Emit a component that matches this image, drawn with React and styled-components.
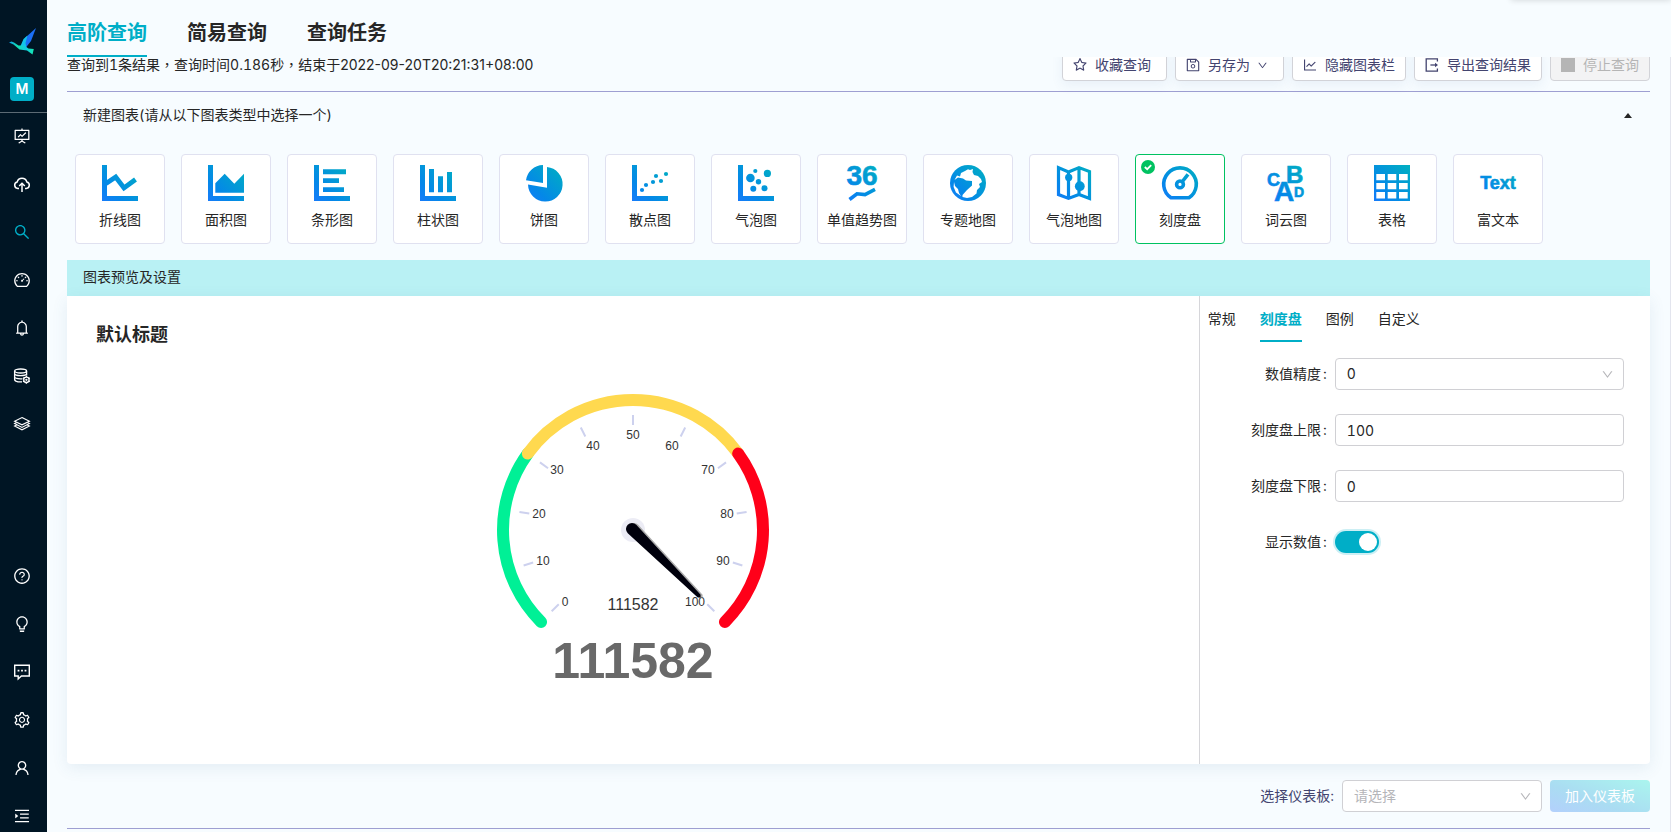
import React, { useState } from 'react';
import { styled, createGlobalStyle } from 'styled-components';
import {
    AiOutlineFundProjectionScreen,
    AiOutlineSearch,
    AiOutlineDashboard,
    AiOutlineBell,
    AiOutlineQuestionCircle,
    AiOutlineBulb,
    AiOutlineSetting,
    AiOutlineUser,
    AiOutlineMenuUnfold,
    AiOutlineStar,
    AiOutlineSave,
    AiOutlineLineChart,
    AiOutlineDown,
} from 'react-icons/ai';

const UploadIcon = () => (
    <svg width="18" height="18" viewBox="0 0 18 18" fill="none" stroke="currentColor" strokeWidth="1.5">
        <path d="M6 13.4H4.8A3.3 3.3 0 0 1 4.2 6.9A5 5 0 0 1 13.8 6.9A3.3 3.3 0 0 1 13.2 13.4H12" />
        <path d="M9 17V9" />
        <path d="M6.2 11L9 8.2L11.8 11" />
    </svg>
);

const DatabaseIcon = () => (
    <svg width="18" height="18" viewBox="0 0 18 18" fill="none" stroke="currentColor" strokeWidth="1.3">
        <ellipse cx="7.6" cy="4" rx="6" ry="2" />
        <path d="M1.6 4V12.4Q1.8 14.4 5 14.8H9M13.6 4V8.6" />
        <path d="M1.6 7Q2 8.6 7.6 8.6T13.6 7M1.6 10.2Q2 11.8 7.6 11.8H9.4" />
        <circle cx="13.4" cy="12.8" r="2.7" />
        <circle cx="13.4" cy="12.8" r="0.5" />
        <path d="M13.4 8.9V10M13.4 15.6V16.7M10 10.9L11 11.4M15.8 14.2L16.8 14.7M16.8 10.9L15.8 11.4M11 14.2L10 14.7" />
    </svg>
);

const LayersIcon = () => (
    <svg width="18" height="18" viewBox="0 0 18 18" fill="none" stroke="currentColor" strokeWidth="1.1">
        <path d="M9 2.6L16.4 6.2L9 9.8L1.6 6.2Z" />
        <path d="M3.6 7.6L1.6 8.6L9 12.4L16.4 8.6L14.4 7.6M3.6 10L1.6 11L9 14.8L16.4 11L14.4 10" />
    </svg>
);

const ChatIcon = () => (
    <svg width="18" height="18" viewBox="0 0 18 18" fill="none" stroke="currentColor" strokeWidth="1.4">
        <path d="M1.7 2.2H16.3V13H8.4L5.2 16V13H1.7Z" />
        <path d="M4.6 7.6H6.4M8.1 7.6H9.9M11.6 7.6H13.4" strokeWidth="1.8" />
    </svg>
);

const ExportIcon = () => (
    <svg width="16" height="16" viewBox="0 0 16 16" fill="none" stroke="currentColor" strokeWidth="1.3">
        <path d="M13.4 4.4V1.8H2.2V14.2H13.4V11.6" />
        <path d="M6.4 8H12" />
        <path d="M11 5.8L14 8L11 10.2Z" fill="currentColor" stroke="none" />
    </svg>
);

const Logo = () => (
    <svg width="27" height="27" viewBox="0 0 27 27">
        <defs>
            <linearGradient id="bird-body" x1="0" y1="0" x2="1" y2="0">
                <stop offset="0" stopColor="#0a9be8" />
                <stop offset="0.35" stopColor="#14e0b0" />
                <stop offset="0.65" stopColor="#12c8e0" />
                <stop offset="1" stopColor="#14e8b0" />
            </linearGradient>
        </defs>
        <path d="M14 19L16.5 9.5L27 0L22 13L16.5 20Z" fill="#1b6ff5" />
        <path d="M11.5 18L14.5 11L18.5 7.5L16.5 15L17.5 20Z" fill="#12c4ea" />
        <path d="M0 14.4L2.5 13.4L5 14.6L9.5 17.6L15 17.6L19.5 20.6L24.8 21L23.5 26.5L18 22.4L10.5 21.6L4.5 16.4Z" fill="url(#bird-body)" />
    </svg>
);

const Axis = () => <path d="M0 0H5V31H36V36H0Z" />;

const chartTypes = [
    {
        key: 'line', label: '折线图',
        art: <><Axis /><path d="M4 18.5L13.7 12L22 23L33.5 14.5" fill="none" stroke="url(#ink)" strokeWidth="4.8" /></>,
    },
    {
        key: 'area', label: '面积图',
        art: <><Axis /><path d="M7.3 18.3L16.7 8.7L26.3 18.7L36 8.7V27.7H7.3Z" /></>,
    },
    {
        key: 'bar', label: '条形图',
        art: <><Axis /><path d="M9 4.3H32V9.3H9ZM9 13.3H25V18H9ZM9 22.3H30V27H9Z" /></>,
    },
    {
        key: 'column', label: '柱状图',
        art: <><Axis /><path d="M9 4H14V27.3H9ZM18 11.3H23V27.3H18ZM27 7H32V27.3H27Z" /></>,
    },
    {
        key: 'pie', label: '饼图',
        art: <path d="M17 0V18L0 15.2A17.4 17.4 0 0 1 17 0ZM21 2A17.3 17.3 0 1 1 2 19.6L21 22.8Z" />,
    },
    {
        key: 'scatter', label: '散点图',
        art: (
            <>
                <Axis />
                {[[10, 25], [14, 20], [21, 17], [24, 11], [29, 16], [34, 9]].map(([x, y]) => (
                    <circle key={x} cx={x} cy={y} r="2.1" />
                ))}
            </>
        ),
    },
    {
        key: 'bubble', label: '气泡图',
        art: (
            <>
                <Axis />
                {[[12.4, 13, 4.3], [17.3, 6, 2.1], [29.4, 8.4, 3.6], [20.5, 16.7, 2.7], [15.3, 23.8, 3], [26.5, 23.2, 3]].map(([x, y, r]) => (
                    <circle key={x} cx={x} cy={y} r={r} />
                ))}
            </>
        ),
    },
    {
        key: 'trend', label: '单值趋势图',
        art: (
            <>
                <IconText x="18" y="20" size={28} textAnchor="middle">36</IconText>
                <path d="M5.5 34.5L13 28.8L21 29.6L31 24.4" fill="none" stroke="url(#ink)" strokeWidth="3.6" />
            </>
        ),
    },
    {
        key: 'region', label: '专题地图',
        art: (
            <>
                <circle cx="18" cy="18" r="18" />
                <path
                    d="M4.5 15L7 10.5L10 11.5L11 8L15 6L18 4.2L20 5L23 4L22.5 7L24 10L28 11L31 14L32 17L29 19L30 22L27 25L26.5 28.5L22 32L17 33L12.5 32L12.5 30L17 25L22 20.5V16L16 15.5L13 13.5L8 12.5Z"
                    fill="#fff"
                />
                <path d="M4 17L5 21L8 24L9 28L11 31L6 27.5L3.6 22Z" fill="#fff" />
            </>
        ),
    },
    {
        key: 'bubblemap', label: '气泡地图',
        art: (
            <>
                <path
                    d="M2.5 2.6L12.5 7L23 2.6L33.5 6.5V33.4L23 29.4L12.5 33.4L2.5 29.6ZM12.5 7V33M23 3V30"
                    fill="none" stroke="url(#ink)" strokeWidth="3.2"
                />
                <circle cx="12.7" cy="12.4" r="3.6" />
                <circle cx="23.8" cy="21.2" r="4.9" />
            </>
        ),
    },
    {
        key: 'gauge', label: '刻度盘',
        art: (
            <g fill="none" stroke="url(#ink)" strokeWidth="3.6">
                <path d="M9 32.8A16.3 16.3 0 1 1 27 32.8Z" />
                <circle cx="18" cy="19.4" r="3.4" />
                <path d="M20 17L26 9.4" />
            </g>
        ),
    },
    {
        key: 'cloud', label: '词云图',
        art: (
            <>
                <IconText x="-1" y="20.5" size={18}>C</IconText>
                <IconText x="18" y="18" size={24}>B</IconText>
                <IconText x="6" y="36" size={28}>A</IconText>
                <IconText x="26" y="31.5" size={14}>D</IconText>
            </>
        ),
    },
    {
        key: 'table', label: '表格',
        art: (
            <path
                fillRule="evenodd"
                d="M0 0H36V36H0ZM2.3 9V15.3H11V9ZM13.7 9V15.3H22.3V9ZM25 9V15.3H33.7V9ZM2.3 18V24.3H11V18ZM13.7 18V24.3H22.3V18ZM25 18V24.3H33.7V18ZM2.3 27V33.6H11V27ZM13.7 27V33.6H22.3V27ZM25 27V33.6H33.7V27Z"
            />
        ),
    },
    {
        key: 'text', label: '富文本',
        art: <IconText x="18" y="24" size={18} textAnchor="middle">Text</IconText>,
    },
];

function IconText({ size, children, ...rest }) {
    return (
        <text
            fontFamily="Liberation Sans, Arial, sans-serif"
            fontWeight="700"
            fontSize={size}
            stroke="url(#ink)"
            strokeWidth="0.6"
            {...rest}
        >
            {children}
        </text>
    );
}

const topMenu = [
    { label: '仪表板', icon: <AiOutlineFundProjectionScreen /> },
    { label: '数据导入', icon: <UploadIcon /> },
    { label: '查询', icon: <AiOutlineSearch />, active: true },
    { label: '监控', icon: <AiOutlineDashboard /> },
    { label: '告警', icon: <AiOutlineBell /> },
    { label: '数据集', icon: <DatabaseIcon /> },
    { label: '资源', icon: <LayersIcon /> },
];

const bottomMenu = [
    { label: '帮助', icon: <AiOutlineQuestionCircle /> },
    { label: '提示', icon: <AiOutlineBulb /> },
    { label: '消息', icon: <ChatIcon /> },
    { label: '设置', icon: <AiOutlineSetting /> },
    { label: '用户', icon: <AiOutlineUser /> },
];

// value, x, baseline
const dialLabels = [
    [0, 92, 258], [10, 70, 217], [20, 66, 170], [30, 84, 126], [40, 120, 102], [50, 160, 91],
    [60, 199, 102], [70, 235, 126], [80, 254, 170], [90, 250, 217], [100, 222, 258],
];

const CX = 160;
const CY = 182;

// value is 0 - 100, the dial runs from 225deg to -45deg
const dialPoint = (value, r) => {
    const a = ((225 - value * 2.7) * Math.PI) / 180;
    return `${(CX + r * Math.cos(a)).toFixed(2)} ${(CY - r * Math.sin(a)).toFixed(2)}`;
};

const arc = (from, to) => `M${dialPoint(from, 130)}A130 130 0 0 1 ${dialPoint(to, 130)}`;

const NEEDLE = 'M0 -6A6 6 0 0 0 0 6L95 2L97 0L95 -2Z';

function GaugeChart() {
    return (
        <GaugeSvg viewBox="0 1 320 415" role="img" aria-label="111582">
            <g fill="none" strokeWidth="12" strokeLinecap="round">
                <path d={arc(0, 30)} stroke="#00f096" />
                <path d={arc(30, 70)} stroke="#ffd94f" />
                <path d={arc(70, 100)} stroke="#ff0019" />
            </g>
            {dialLabels.map(([value, x, y]) => (
                <g key={value}>
                    <path d={`M${dialPoint(value, 115)}L${dialPoint(value, 105)}`} stroke="#cdd1ee" strokeWidth="2" />
                    <text x={x} y={y} fontSize="12" textAnchor="middle" fill="#333">{value}</text>
                </g>
            ))}
            <circle cx={CX} cy={CY} r="12" fill="#ececf5" />
            <path d={NEEDLE} transform="translate(161 181) rotate(45)" fill="#aaa" />
            <path d={NEEDLE} transform="translate(159 181) rotate(45)" fill="#00000c" />
            <text x={CX} y="262" fontSize="16" textAnchor="middle" fill="#333">111582</text>
            <text x={CX} y="330" fontSize="50" fontWeight="700" textAnchor="middle" fill="#696969">111582</text>
        </GaugeSvg>
    );
}

function App() {
    const [chartType, setChartType] = useState('gauge');
    const [showValue, setShowValue] = useState(true);

    return (
        <Layout>
            <GlobalStyle />
            <Defs aria-hidden="true">
                <defs>
                    <linearGradient id="ink" gradientUnits="userSpaceOnUse" x1="0" y1="36" x2="36" y2="0">
                        <stop offset="0" stopColor="#177bfa" />
                        <stop offset="0.3" stopColor="#0488e8" />
                        <stop offset="1" stopColor="#00b0c0" />
                    </linearGradient>
                </defs>
            </Defs>

            <Sidebar>
                <LogoLink href="#"><Logo /></LogoLink>
                <Avatar>M</Avatar>
                <Menu>
                    {topMenu.map((item) => (
                        <MenuButton key={item.label} aria-label={item.label} $active={item.active}>{item.icon}</MenuButton>
                    ))}
                </Menu>
                <BottomMenu>
                    {bottomMenu.map((item) => (
                        <MenuButton key={item.label} aria-label={item.label}>{item.icon}</MenuButton>
                    ))}
                    <Trigger aria-label="展开菜单"><AiOutlineMenuUnfold /></Trigger>
                </BottomMenu>
            </Sidebar>

            <Main>
                <Header>
                    <PageTab $active>高阶查询</PageTab>
                    <PageTab>简易查询</PageTab>
                    <PageTab>查询任务</PageTab>
                </Header>
                <Content>
                    <Toolbar>
                        <Status>查询到1条结果，查询时间0.186秒，结束于<Time>2022-09-20T20:21:31+08:00</Time></Status>
                        <ToolButtons>
                            <ToolButton $wide><AiOutlineStar />收藏查询</ToolButton>
                            <ToolButton $wide><AiOutlineSave />另存为<SmallDown /></ToolButton>
                            <ToolButton><AiOutlineLineChart />隐藏图表栏</ToolButton>
                            <ToolButton><ExportIcon />导出查询结果</ToolButton>
                            <ToolButton disabled><StopSquare viewBox="0 0 16 16"><path d="M1 1H15V15H1Z" /></StopSquare>停止查询</ToolButton>
                        </ToolButtons>
                    </Toolbar>

                    <SectionHead>
                        新建图表(请从以下图表类型中选择一个)
                        <Collapse aria-label="收起"><Caret /></Collapse>
                    </SectionHead>

                    <CardList>
                        {chartTypes.map((type) => (
                            <Card
                                key={type.key}
                                onClick={() => setChartType(type.key)}
                                $selected={chartType === type.key}
                            >
                                {chartType === type.key && (
                                    <Check viewBox="0 0 14 14">
                                        <circle cx="7" cy="7" r="7" fill="#00c261" />
                                        <path d="M3.8 7L6.2 9.2L10.2 5.2" fill="none" stroke="#fff" strokeWidth="1.8" />
                                    </Check>
                                )}
                                <CardIcon viewBox="0 0 36 36" fill="url(#ink)">{type.art}</CardIcon>
                                {type.label}
                            </Card>
                        ))}
                    </CardList>

                    <Banner>图表预览及设置</Banner>
                    <Panel>
                        <Preview>
                            <ChartTitle>默认标题</ChartTitle>
                            <GaugeChart />
                        </Preview>
                        <Settings>
                            <SettingTabs>
                                <SettingTab>常规</SettingTab>
                                <SettingTab $active>刻度盘</SettingTab>
                                <SettingTab>图例</SettingTab>
                                <SettingTab>自定义</SettingTab>
                            </SettingTabs>
                            <Form>
                                <Label htmlFor="precision">数值精度<Colon>:</Colon></Label>
                                <SelectBox>
                                    <Select id="precision" defaultValue="0">
                                        <option value="0">0</option>
                                        <option value="1">1</option>
                                        <option value="2">2</option>
                                    </Select>
                                    <SelectArrow />
                                </SelectBox>
                                <Label htmlFor="max">刻度盘上限<Colon>:</Colon></Label>
                                <Input id="max" defaultValue="100" />
                                <Label htmlFor="min">刻度盘下限<Colon>:</Colon></Label>
                                <Input id="min" defaultValue="0" />
                                <Label htmlFor="show">显示数值<Colon>:</Colon></Label>
                                <Switch
                                    id="show"
                                    type="checkbox"
                                    checked={showValue}
                                    onChange={(e) => setShowValue(e.target.checked)}
                                />
                            </Form>
                        </Settings>
                    </Panel>

                    <Footer>
                        <FooterLabel htmlFor="board">选择仪表板:</FooterLabel>
                        <BoardBox>
                            <Select id="board" defaultValue="" $empty>
                                <option value="">请选择</option>
                            </Select>
                            <SelectArrow />
                        </BoardBox>
                        <AddButton>加入仪表板</AddButton>
                    </Footer>
                </Content>
            </Main>
        </Layout>
    );
}

const GlobalStyle = createGlobalStyle`
    * {
        box-sizing: border-box;
    }

    body {
        margin: 0;
        font-family: Inter, "Noto Sans CJK SC", sans-serif;
        font-size: 14px;
        font-variant-numeric: tabular-nums;
        line-height: 22px;
        color: #262626;
        background-color: #f7fcff;
    }

    button, input, select {
        font: inherit;
        font-variant-numeric: inherit;
        color: inherit;
    }

    button {
        padding: 0;
        border: none;
        background: none;
        cursor: pointer;
    }
`;

const Layout = styled.div`
    display: flex;
    height: 100vh;
    overflow: hidden;
`;

const Defs = styled.svg`
    position: absolute;
    width: 0;
    height: 0;
`;

const Sidebar = styled.nav`
    flex: none;
    display: flex;
    flex-direction: column;
    width: 47px;
    background-color: #001524;
    color: white;
`;

const LogoLink = styled.a`
    height: 77px;
    padding: 28px 0 0 9px;
`;

const Avatar = styled.div`
    width: 24px;
    height: 24px;
    margin: 0 0 11px 10px;
    border-radius: 4px;
    background-color: #00aec7;
    font-weight: 600;
    line-height: 24px;
    text-align: center;
`;

const MenuButton = styled.button`
    display: flex;
    align-items: center;
    height: 48px;
    padding-left: 13px;
    font-size: 18px;
    color: ${(props) => (props.$active ? '#00aec7' : 'white')};
`;

const Menu = styled.div`
    display: flex;
    flex-direction: column;
    border-top: 1px solid #5c6a74;

    ${MenuButton} {
        padding-bottom: 2px;
    }
`;

const BottomMenu = styled.div`
    display: flex;
    flex-direction: column;
    margin-top: auto;
`;

const Trigger = styled(MenuButton)`
    height: 32px;
    margin-top: 8px;
`;

const Main = styled.main`
    flex: 1;
    display: flex;
    flex-direction: column;
    min-width: 0;
`;

const Header = styled.header`
    position: relative;
    flex: none;
    display: flex;
    gap: 40px;
    height: 57px;
    padding: 0 20px;

    &::after {
        content: '';
        position: absolute;
        right: 0;
        top: -8px;
        width: 160px;
        height: 8px;
        box-shadow: 0 0 6px rgba(0, 0, 0, 0.16);
    }
`;

const PageTab = styled.button`
    padding-top: 10px;
    border-bottom: 2px solid ${(props) => (props.$active ? '#00aec7' : 'transparent')};
    font-size: 20px;
    font-weight: 700;
    line-height: 28px;
    color: ${(props) => (props.$active ? '#00aec7' : '#262626')};
`;

const Content = styled.div`
    flex: 1;
    min-height: 0;
    overflow: hidden;
    padding: 0 20px;
    border-right: 1px solid #e3e5ee;
`;

const Toolbar = styled.div`
    display: flex;
    justify-content: space-between;
    align-items: center;
    margin-top: -8px;
    padding-bottom: 10px;
    border-bottom: 1px solid #9e9fd2;
`;

const Status = styled.span`
    font-family: Inter, "Noto Sans CJK TC", sans-serif;
`;

const Time = styled.time`
    font-variant-numeric: proportional-nums;
`;

const ToolButtons = styled.div`
    display: flex;
    gap: 8px;
`;

const ToolButton = styled.button`
    display: flex;
    align-items: center;
    gap: 7px;
    height: 32px;
    padding: 0 ${(props) => (props.$wide ? '15px' : '10px')} 0 9px;
    border: 1px solid #d2d3d8;
    border-radius: 4px;
    background-color: white;
    box-shadow: 0 4px 12px rgba(60, 100, 160, 0.08);
    color: #43446f;

    svg {
        width: 16px;
        height: 16px;
    }

    &:disabled {
        background-color: #f3f3f4;
        box-shadow: none;
        color: #b5b5b5;
        cursor: not-allowed;
    }
`;

const SmallDown = styled(AiOutlineDown)`
    && {
        width: 11px;
        height: 11px;
    }
`;

const StopSquare = styled.svg`
    fill: currentColor;
`;

const SectionHead = styled.div`
    display: flex;
    justify-content: space-between;
    align-items: center;
    height: 46px;
    padding: 0 16px;
`;

const Collapse = styled.button`
    padding: 8px 2px;
`;

const Caret = styled.span`
    display: block;
    border: 4px solid transparent;
    border-top: none;
    border-bottom: 5px solid #262626;
`;

const CardList = styled.div`
    display: flex;
    gap: 16px;
    padding: 16px 8px;
`;

const Card = styled.button`
    position: relative;
    flex: 0 1 90px;
    display: flex;
    flex-direction: column;
    align-items: center;
    gap: 8px;
    height: 90px;
    padding-top: 10px;
    border: 1px solid ${(props) => (props.$selected ? '#00c261' : '#e0e1f0')};
    border-radius: 4px;
    background-color: white;
    white-space: nowrap;
`;

const CardIcon = styled.svg`
    flex: none;
    width: 36px;
    height: 36px;
    overflow: visible;
`;

const Check = styled.svg`
    position: absolute;
    left: 5px;
    top: 5px;
    width: 14px;
    height: 14px;
`;

const Banner = styled.div`
    padding: 6px 16px 8px;
    background-color: #b9f1f4;
`;

const Panel = styled.section`
    display: grid;
    grid-template-columns: 71.5% 28.5%;
    border-radius: 0 0 4px 4px;
    background-color: white;
    box-shadow: 0 4px 16px rgba(60, 110, 150, 0.1);
`;

const Preview = styled.div`
    display: flex;
    flex-direction: column;
`;

const ChartTitle = styled.h3`
    margin: 0;
    padding: 25px 29px 0;
    font-size: 18px;
    font-weight: 700;
    line-height: 28px;
`;

const GaugeSvg = styled.svg`
    align-self: center;
    width: 320px;
    height: 415px;
    font-family: "Liberation Sans", Arial, sans-serif;
`;

const Settings = styled.div`
    border-left: 1px solid #d6d6da;
`;

const SettingTabs = styled.div`
    display: flex;
    gap: 24px;
    padding: 0 8px;
`;

const SettingTab = styled.button`
    height: 46px;
    padding-top: 2px;
    border-bottom: 2px solid ${(props) => (props.$active ? '#00aec7' : 'transparent')};
    font-weight: ${(props) => (props.$active ? 700 : 400)};
    color: ${(props) => (props.$active ? '#00aec7' : '#262626')};
`;

const Form = styled.form`
    display: grid;
    grid-template-columns: 135px 1fr;
    grid-auto-rows: 32px;
    row-gap: 24px;
    align-items: center;
    padding: 16px 26px 0 0;
`;

const Label = styled.label`
    padding-right: 8px;
    text-align: right;
`;

const Colon = styled.span`
    margin-left: 2px;
`;

const Input = styled.input`
    width: 100%;
    height: 32px;
    padding: 0 11px;
    border: 1px solid #d0d0d4;
    border-radius: 4px;
    background-color: white;
    outline: none;

    &:focus {
        border-color: #00aec7;
    }
`;

const SelectBox = styled.div`
    position: relative;
`;

const BoardBox = styled(SelectBox)`
    width: 200px;
`;

const Select = styled(Input).attrs({ as: 'select' })`
    display: block;
    appearance: none;
    color: ${(props) => (props.$empty ? '#b5b5b9' : 'inherit')};
`;

const SelectArrow = styled(AiOutlineDown)`
    position: absolute;
    right: 10px;
    top: 10px;
    width: 13px;
    height: 13px;
    color: #b5b5b9;
    pointer-events: none;
`;

const Switch = styled.input`
    appearance: none;
    width: 44px;
    height: 22px;
    margin: 0;
    padding: 2px;
    border-radius: 11px;
    background-color: ${(props) => (props.checked ? '#00aec7' : '#bfbfbf')};
    box-shadow: 0 0 0 2px rgba(0, 174, 199, 0.2);
    cursor: pointer;

    &::before {
        content: '';
        display: block;
        width: 18px;
        height: 18px;
        margin-left: ${(props) => (props.checked ? 'auto' : '0')};
        border-radius: 50%;
        background-color: white;
    }
`;

const Footer = styled.div`
    display: flex;
    justify-content: flex-end;
    align-items: center;
    gap: 8px;
    padding: 16px 0;
    border-bottom: 1px solid #9e9fd2;
`;

const FooterLabel = styled.label`
    color: #43446f;
`;

const AddButton = styled.button`
    width: 100px;
    height: 32px;
    border-radius: 4px;
    background-image: linear-gradient(20deg, #b3d0fc, #aadcf2 40%, #aaf5ee);
    color: white;
`;

export default App;
